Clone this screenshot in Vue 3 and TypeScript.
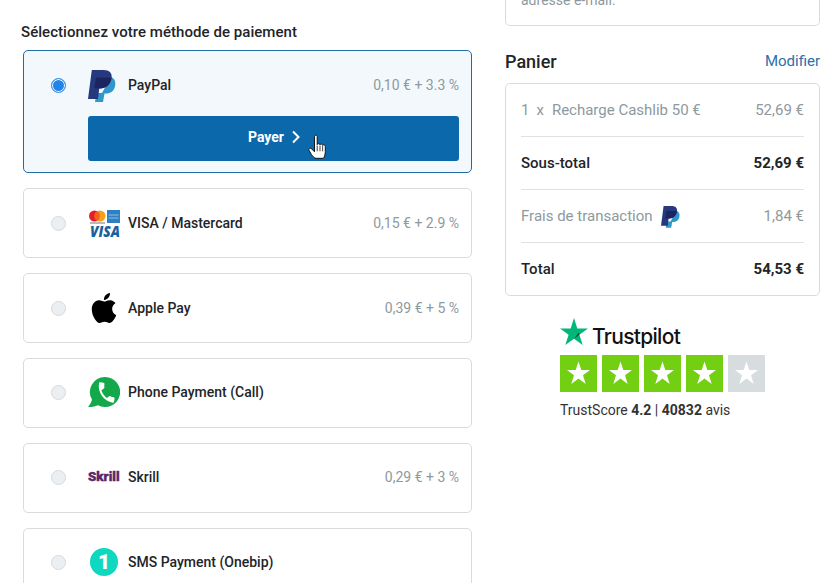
<template>
  <div class="page">
    <section class="methods">
      <h2 class="methods-title">Sélectionnez votre méthode de paiement</h2>
      <div
        v-for="method in methods"
        :key="method.key"
        class="method"
        :class="{ selected: method.key === selectedKey }"
      >
        <div class="method-row">
          <span class="radio"></span>
          <span class="logo">
            <svg v-if="method.key === 'paypal'" class="logo-paypal" viewBox="0 0 28 33">
              <path fill="#2f97c9" d="M23 8c4 1.500 5 5 4 9.500C26 22 22.500 24.500 18 24.500H16.500L15 33H7L8.500 24H14Z" />
              <path fill="#26397f" d="M3.800 1H15.500C21.500 1 24.500 4 23.500 9.500C22.500 16 17.500 19.500 12 19.500H11.200L10 30H0Z" />
              <path fill="#1d2561" d="M8 8.500H23.500C22.500 16 17.500 19.500 12 19.500H6.300Z" />
            </svg>
            <svg v-else-if="method.key === 'card'" class="logo-card" viewBox="0 -4 32 35">
              <circle cx="6.500" cy="6" r="5.500" fill="#e2202c" />
              <circle cx="12" cy="6" r="5.500" fill="#f79e1b" />
              <path fill="#f2621f" d="M9.250 1.240a5.500 5.500 0 0 1 0 9.520a5.500 5.500 0 0 1 0-9.520Z" />
              <rect x="2" y="12.500" width="15" height="1" fill="#777" />
              <rect x="19" y="0" width="13" height="13" fill="#2e80c2" />
              <rect x="20.500" y="4.500" width="10" height="1" fill="#8fbfe3" />
              <rect x="20.500" y="7.500" width="10" height="1" fill="#8fbfe3" />
              <text x="2" y="26.500" class="visa-text" textLength="30" lengthAdjust="spacingAndGlyphs">VISA</text>
            </svg>
            <svg v-else-if="method.key === 'apple'" class="logo-apple" viewBox="0 0 24 24">
              <path fill="#000" d="M12.152 6.896c-.948 0-2.415-1.078-3.960-1.040-2.040.027-3.910 1.183-4.961 3.014-2.117 3.675-.546 9.103 1.519 12.090 1.013 1.454 2.208 3.090 3.792 3.039 1.520-.065 2.090-.987 3.935-.987 1.831 0 2.350.987 3.960.948 1.637-.026 2.676-1.480 3.676-2.948 1.156-1.688 1.636-3.325 1.662-3.415-.039-.013-3.182-1.221-3.220-4.857-.026-3.040 2.480-4.494 2.597-4.559-1.429-2.090-3.623-2.324-4.390-2.376-2-.156-3.675 1.090-4.610 1.090zM15.530 3.830c.843-1.012 1.400-2.427 1.245-3.830-1.207.052-2.662.805-3.532 1.818-.780.896-1.454 2.338-1.273 3.714 1.338.104 2.715-.688 3.559-1.701" />
            </svg>
            <svg v-else-if="method.key === 'phone'" class="logo-phone" viewBox="0 0 32 30">
              <path fill="#13a84a" d="M17 0A15 15 0 1 1 10 28.200C7 29.500 3.500 30 0 30C2 28 3.500 25 4 22.600A15 15 0 0 1 17 0Z" />
              <g transform="translate(18.500 15.500) rotate(10) translate(-12 -12)">
                <path fill="#fff" d="M6.620 10.790c1.440 2.830 3.760 5.140 6.590 6.590l2.200-2.200c.27-.27.67-.36 1.020-.24 1.120.37 2.330.57 3.570.57.550 0 1 .45 1 1V20c0 .55-.45 1-1 1-9.390 0-17-7.610-17-17 0-.55.45-1 1-1h3.500c.55 0 1 .45 1 1 0 1.250.2 2.450.57 3.570.11.350.03.740-.25 1.020l-2.200 2.200z" />
              </g>
            </svg>
            <span v-else-if="method.key === 'skrill'" class="logo-skrill">Skrill</span>
            <span v-else class="logo-onebip">1</span>
          </span>
          <span class="method-name">{{ method.name }}</span>
          <span class="method-fee">{{ method.fee }}</span>
        </div>
        <button v-if="method.key === selectedKey" class="pay-button">
          Payer
          <svg class="chevron" viewBox="0 0 10 14">
            <path d="M2 1.500 7.500 7 2 12.500" fill="none" stroke="#fff" stroke-width="2" />
          </svg>
          <svg class="cursor" viewBox="0 0 18 26" preserveAspectRatio="none">
            <path
              fill="#fff"
              stroke="#111"
              stroke-width="1"
              stroke-linejoin="round"
              d="M6.500 2.500C6.500 .7 9.200 .7 9.200 2.500V11C9.500 9.700 12 9.700 12 11.200C12.300 10.200 14.600 10.200 14.600 11.800C15 11 17.300 11 17.300 12.800V18.500C17.300 21.500 16 25.300 15 25.300H8C6.500 25.300 5 23.500 3.500 21.500L1 17C.2 15.300 2.400 14 3.700 15.500L6.500 18.500Z"
            />
            <path d="M9.200 12V18M12 12V18M14.600 12.500V18" stroke="#111" stroke-width=".8" />
          </svg>
        </button>
      </div>
    </section>

    <aside class="side">
      <div class="notice">adresse e-mail.</div>

      <div class="cart-head">
        <h2 class="cart-title">Panier</h2>
        <a class="cart-edit">Modifier</a>
      </div>

      <div class="cart">
        <div class="cart-row muted">
          <span class="cart-item"><span class="qty">1</span><span class="qty">x</span>Recharge Cashlib 50 €</span>
          <span>52,69 €</span>
        </div>
        <div class="cart-row strong">
          <span>Sous-total</span>
          <span>52,69 €</span>
        </div>
        <div class="cart-row muted">
          <span class="cart-item">
            Frais de transaction
            <svg class="fee-logo" viewBox="0 0 28 33">
              <path fill="#2f97c9" d="M23 8c4 1.500 5 5 4 9.500C26 22 22.500 24.500 18 24.500H16.500L15 33H7L8.500 24H14Z" />
              <path fill="#26397f" d="M3.800 1H15.500C21.500 1 24.500 4 23.500 9.500C22.500 16 17.500 19.500 12 19.500H11.200L10 30H0Z" />
              <path fill="#1d2561" d="M8 8.500H23.500C22.500 16 17.500 19.500 12 19.500H6.300Z" />
            </svg>
          </span>
          <span>1,84 €</span>
        </div>
        <div class="cart-row strong">
          <span>Total</span>
          <span>54,53 €</span>
        </div>
      </div>

      <div class="trust">
        <div class="trust-brand">
          <svg class="trust-logo-star" viewBox="0 0 28 28">
            <path fill="#00b67a" d="M14 0 17.300 10.400H28L19.400 16.700 22.700 27.100 14 20.700 5.300 27.100 8.600 16.700 0 10.400H10.700Z" />
            <path fill="#005128" d="M19.400 16.700 18.700 14.500 14 20.700Z" />
          </svg>
          <span class="trust-name">Trustpilot</span>
        </div>
        <div class="trust-stars">
          <span
            v-for="n in 5"
            :key="n"
            class="trust-star"
            :class="{ off: n > 4 }"
          >
            <svg viewBox="0 0 37 37">
              <path fill="#fff" d="M18.500 6.500 21.300 15H30L23 20.300 25.700 29 18.500 23.600 11.300 29 14 20.300 7 15H15.700Z" />
            </svg>
          </span>
        </div>
        <div class="trust-score">TrustScore <b>4.2</b> | <b>40832</b> avis</div>
      </div>
    </aside>
  </div>
</template>

<script setup lang="ts">
const selectedKey = 'paypal'

const methods = [
  { key: 'paypal', name: 'PayPal', fee: '0,10 € + 3.3 %' },
  { key: 'card', name: 'VISA / Mastercard', fee: '0,15 € + 2.9 %' },
  { key: 'apple', name: 'Apple Pay', fee: '0,39 € + 5 %' },
  { key: 'phone', name: 'Phone Payment (Call)', fee: '' },
  { key: 'skrill', name: 'Skrill', fee: '0,29 € + 3 %' },
  { key: 'onebip', name: 'SMS Payment (Onebip)', fee: '' }
]
</script>

<style>
html,
body {
  margin: 0;
  overflow: hidden;
  background: #fff;
}
</style>

<style scoped>
.page {
  display: flex;
  gap: 33px;
  height: 583px;
  padding-left: 23px;
  overflow: hidden;
  font-family: Roboto, "Liberation Sans", sans-serif;
  font-size: 14px;
  color: #212529;
}

.methods {
  flex: none;
  width: 449px;
  padding-top: 22px;
}

.methods-title {
  margin: 0 0 8px -2px;
  font-size: 15px;
  line-height: 20px;
  font-weight: 500;
  letter-spacing: 0.05px;
}

.method {
  flex: none;
  margin-bottom: 15px;
  padding: 11px 12px 11px 27px;
  border: 1px solid #d9dcde;
  border-radius: 5px;
}

.method.selected {
  background: #f3f8fc;
  border-color: #1c6ea4;
}

.method-row {
  display: flex;
  align-items: center;
  height: 46px;
}

/* the lower rows sit a pixel higher in their cards */
.method:nth-child(n+5) .method-row {
  margin: -1px 0 1px;
}

.radio {
  flex: none;
  box-sizing: border-box;
  width: 15px;
  height: 15px;
  margin-right: 22px;
  background: #eceff1;
  border: 1px solid #d5dadd;
  border-radius: 50%;
}

.selected .radio {
  background: #2285e6;
  border-color: #3d93e6;
  box-shadow: inset 0 0 0 1px #fff;
}

.logo {
  flex: none;
  display: flex;
  align-items: center;
  width: 32px;
  height: 34px;
  margin-right: 8px;
}

.logo-paypal {
  width: 28px;
  height: 33px;
}

.logo-card {
  width: 32px;
  height: 35px;
}

.visa-text {
  font-family: "Open Sans", sans-serif;
  font-size: 15px;
  font-weight: 800;
  font-style: italic;
  fill: #1a5f9e;
}

.logo-apple {
  width: 30px;
  height: 30px;
  margin-left: 1px;
}

.logo-phone {
  width: 32px;
  height: 30px;
}

.logo-skrill {
  font-size: 13.300px;
  line-height: 18px;
  font-weight: 900;
  color: #5c2568;
  -webkit-text-stroke: 0.4px #5c2568;
}

.logo-onebip {
  display: flex;
  align-items: center;
  justify-content: center;
  width: 28px;
  height: 28px;
  margin-left: 2px;
  background: #0fd8c0;
  border-radius: 50%;
  font-size: 21px;
  font-weight: 900;
  color: #fff;
}

.method-name {
  flex: 1;
  font-weight: 500;
}

.method-fee {
  color: #8e999e;
}

.pay-button {
  position: relative;
  display: flex;
  align-items: center;
  justify-content: center;
  gap: 7px;
  box-sizing: border-box;
  width: 371px;
  height: 45px;
  margin: 8px 0 0 37px;
  padding: 0 0 3px 2px;
  background: #0b69ab;
  border: 0;
  border-radius: 3px;
  font-family: inherit;
  font-size: 14px;
  font-weight: 700;
  color: #fff;
}

.chevron {
  width: 10px;
  height: 14px;
}

.cursor {
  position: absolute;
  left: 220px;
  top: 18px;
  width: 18px;
  height: 25px;
}

.side {
  flex: none;
  width: 315px;
}

.notice {
  margin-top: -10px;
  padding: 0 15px 15px;
  border: 1px solid #d9dcde;
  border-top: 0;
  border-radius: 0 0 5px 5px;
  line-height: 20px;
  color: #8e999e;
}

.cart-head {
  display: flex;
  align-items: center;
  justify-content: space-between;
  height: 28px;
  margin: 21px 0 8px;
}

.cart-title {
  margin: 0;
  font-size: 18px;
  font-weight: 500;
}

.cart-edit {
  font-size: 15px;
  color: #2a70b0;
}

.cart {
  padding: 0 15px;
  border: 1px solid #d9dcde;
  border-radius: 5px;
  font-size: 15px;
}

.cart-row {
  display: flex;
  align-items: center;
  justify-content: space-between;
  height: 52px;
  border-bottom: 1px solid #dfe2e4;
}

.cart-row:last-child {
  border-bottom: 0;
}

.cart-row.muted {
  color: #8e999e;
}

.cart-row.strong {
  font-weight: 700;
  color: #212529;
}

.cart-row.strong span:first-child {
  font-weight: 500;
}

.cart-item {
  display: flex;
  align-items: center;
}

.qty {
  margin-right: 7px;
}

.qty + .qty {
  margin-right: 8px;
}

.fee-logo {
  width: 19px;
  height: 23px;
  margin-left: 8px;
}

.trust {
  margin: 22px 0 0 55px;
}

.trust-brand {
  display: flex;
  align-items: center;
  gap: 4px;
  height: 28px;
}

.trust-logo-star {
  width: 28px;
  height: 28px;
}

.trust-name {
  margin-top: 8px;
  font-family: Inter, Roboto, sans-serif;
  font-size: 21px;
  font-weight: 500;
  letter-spacing: -0.7px;
  color: #111;
}

.trust-stars {
  display: flex;
  gap: 5px;
  margin-top: 9px;
}

.trust-star {
  display: block;
  width: 37px;
  height: 37px;
  background: #73cf11;
}

.trust-star.off {
  background: #d7dcde;
}

.trust-star svg {
  display: block;
  width: 37px;
  height: 37px;
}

.trust-score {
  margin-top: 8px;
  font-size: 14px;
  line-height: 20px;
  color: #333;
}

.trust-score b {
  font-weight: 700;
}
</style>
